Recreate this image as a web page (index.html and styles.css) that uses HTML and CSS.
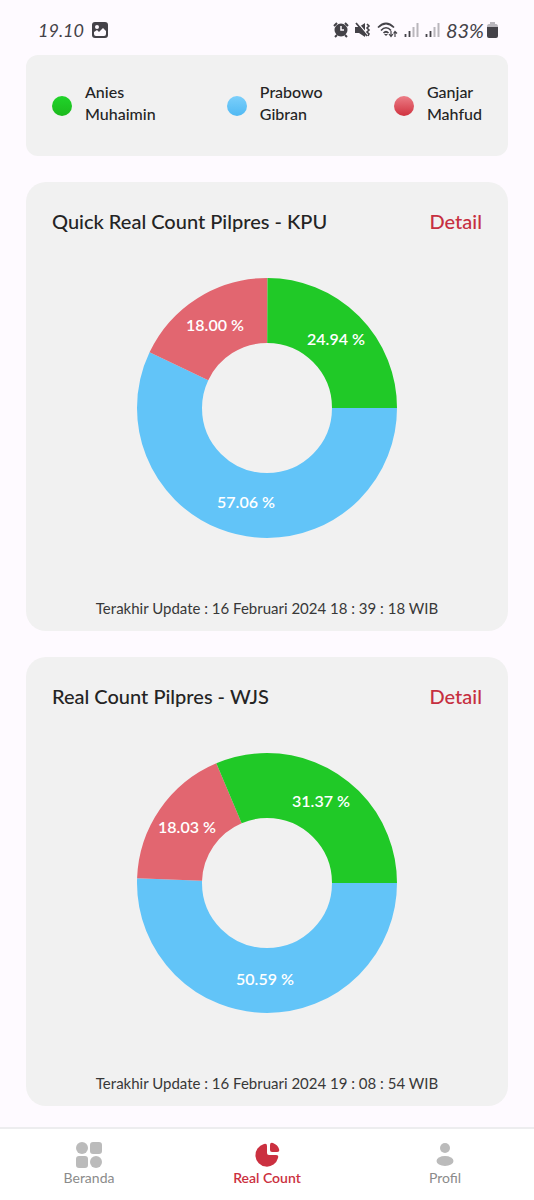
FILE: index.html
```html
<!DOCTYPE html>
<html lang="id">
<head>
  <meta charset="UTF-8" />
  <meta name="viewport" content="width=device-width, initial-scale=1.0" />
  <title>Real Count Pilpres</title>
  <link rel="stylesheet" href="styles.css">
</head>
<body>

  <!-- Status bar -->
  <header class="status">
    <div class="status-left">
      <span class="status-text">19.10</span>
      <svg width="16" height="16" viewBox="0 0 16 16">
        <rect width="16" height="16" rx="3" fill="#444248" />
        <circle cx="5" cy="5" r="2" fill="#fefaff" />
        <path d="M2 12V10L5 8L7 10L11 6L14 9V12Q14 14 12 14H4Q2 14 2 12Z" fill="#fefaff" />
      </svg>
    </div>
    <div class="status-right">
      <svg width="16" height="16" viewBox="0 0 16 16">
        <circle cx="8" cy="8" r="6.500" fill="#444248" />
        <path d="M1 4L4 1M12 1L15 4M4 13L2 15M12 13L14 15" stroke="#444248" stroke-width="2" />
        <path d="M8 4V8H11" stroke="#fefaff" stroke-width="1.5" fill="none" />
      </svg>
      <svg width="16" height="16" viewBox="0 0 16 16">
        <path d="M0 5H4L10 1V15L4 11H0Z" fill="#444248" />
        <path d="M2 0L13 13" stroke="#fefaff" stroke-width="1.2" />
        <path d="M1 1L12 14" stroke="#444248" stroke-width="1.8" />
        <path d="M12 2L14 4L12 6L14 8L12 10L14 12L13 14" stroke="#444248" stroke-width="1.6" fill="none" />
      </svg>
      <svg width="21" height="16" viewBox="0 0 21 16">
        <g fill="none" stroke="#444248" stroke-width="1.7">
          <path d="M1 5.500Q9 -2.500 17 5.500" />
          <path d="M4 8.500Q9 3 14 8.500" />
          <path d="M6.500 11Q9 8.500 11.500 11" />
        </g>
        <path d="M7 12H11L9 14Z" fill="#444248" />
        <path d="M14 9V14M12 12L14 14.500L16 12M18 15V10M16.500 11.500L18 9.500L20 11.500" stroke="#444248" stroke-width="1.2" fill="none" />
      </svg>
      <svg width="15" height="16" viewBox="0 0 15 16">
        <path d="M1.500 12V15M5.500 9V15" stroke="#444248" stroke-width="1.8" />
        <path d="M9.500 5V15M13.500 1V15" stroke="#b9b6bc" stroke-width="2" />
      </svg>
      <svg width="15" height="16" viewBox="0 0 15 16">
        <path d="M1.500 12V15M5.500 9V15" stroke="#444248" stroke-width="1.8" />
        <path d="M9.500 5V15M13.500 1V15" stroke="#b9b6bc" stroke-width="2" />
      </svg>
      <span class="status-text battery-text">83%</span>
      <svg width="11" height="16" viewBox="0 0 11 16">
        <path d="M3 0H8V2H9Q11 2 11 5H0Q0 2 2 2H3Z" fill="#b9b6bc" />
        <path d="M0 5H11V14Q11 16 9 16H2Q0 16 0 14Z" fill="#444248" />
      </svg>
    </div>
  </header>

  <main class="content">
    <section class="legend">
      <div class="legend-item">
        <span class="dot dot-green"></span>
        <span class="legend-name">Anies<br>Muhaimin</span>
      </div>
      <div class="legend-item">
        <span class="dot dot-blue"></span>
        <span class="legend-name">Prabowo<br>Gibran</span>
      </div>
      <div class="legend-item">
        <span class="dot dot-red"></span>
        <span class="legend-name">Ganjar<br>Mahfud</span>
      </div>
    </section>

    <section class="card">
      <div class="card-header">
        <h2>Quick Real Count Pilpres - KPU</h2>
        <a href="#kpu">Detail</a>
      </div>
      <svg class="chart" viewBox="0 0 260 260">
        <circle class="slice blue" cx="130" cy="130" r="97.5" pathLength="100" stroke-dasharray="57.06 42.94" />
        <circle class="slice red" cx="130" cy="130" r="97.5" pathLength="100" stroke-dasharray="18 82" stroke-dashoffset="-57.06" />
        <circle class="slice green" cx="130" cy="130" r="97.5" pathLength="100" stroke-dasharray="24.94 75.06" stroke-dashoffset="-75.06" />
        <text x="199" y="67">24.94 %</text>
        <text x="78" y="53">18.00 %</text>
        <text x="109" y="230">57.06 %</text>
      </svg>
      <p class="updated">Terakhir Update : 16 Februari 2024 18 : 39 : 18 WIB</p>
    </section>

    <section class="card">
      <div class="card-header">
        <h2>Real Count Pilpres - WJS</h2>
        <a href="#wjs">Detail</a>
      </div>
      <svg class="chart" viewBox="0 0 260 260">
        <circle class="slice blue" cx="130" cy="130" r="97.5" pathLength="100" stroke-dasharray="50.59 49.41" />
        <circle class="slice red" cx="130" cy="130" r="97.5" pathLength="100" stroke-dasharray="18.03 81.97" stroke-dashoffset="-50.59" />
        <circle class="slice green" cx="130" cy="130" r="97.5" pathLength="100" stroke-dasharray="31.38 68.62" stroke-dashoffset="-68.62" />
        <text x="184" y="54">31.37 %</text>
        <text x="50" y="80">18.03 %</text>
        <text x="128" y="232">50.59 %</text>
      </svg>
      <p class="updated">Terakhir Update : 16 Februari 2024 19 : 08 : 54 WIB</p>
    </section>
  </main>

  <!-- Bottom menu -->
  <nav class="menu">
    <a href="#beranda">
      <svg width="26" height="26" viewBox="0 0 26 26" fill="#bbb">
        <circle cx="6" cy="6" r="6" />
        <rect x="14" width="12" height="12" rx="3" />
        <rect y="14" width="12" height="12" rx="3" />
        <circle cx="20" cy="20" r="6" />
      </svg>
      Beranda
    </a>
    <a href="#real-count" class="active">
      <svg width="26" height="26" viewBox="0 0 26 26" fill="#cb3040">
        <path d="M10 2Q13 1 13 4V11Q13 13 15 13H22Q25 13 24 16A11.500 11.500 0 1 1 10 2Z" />
        <path d="M16 3Q16 0 19 1Q24 3 25 7Q26 10 23 10H18Q16 10 16 8Z" />
      </svg>
      Real Count
    </a>
    <a href="#profil">
      <svg width="26" height="26" viewBox="0 0 26 26" fill="#bbb">
        <circle cx="13" cy="6" r="5" />
        <ellipse cx="13" cy="19" rx="8.500" ry="5" />
      </svg>
      Profil
    </a>
  </nav>

</body>
</html>
```
FILE: styles.css
```css
body {
  margin: 0;
  min-height: 100vh;
  display: flex;
  flex-direction: column;
  background-color: #fefaff;
  color: #242424;
  font-family: Lato, "Open Sans", sans-serif;
}
a {
  text-decoration: none;
}

/* Status bar */
.status {
  display: flex;
  justify-content: space-between;
  align-items: center;
  height: 55px;
  padding: 5px 36px 0 38px;
  box-sizing: border-box;
}
.status-left, .status-right {
  display: flex;
  align-items: center;
}
.status-left {
  gap: 8px;
}
.status-right {
  gap: 6px;
}
.status-text {
  color: #444248;
  font-size: 18px;
  font-style: italic;
}
.battery-text {
  font-size: 20px;
}
.status-right .battery-text {
  margin-right: -3px;
}

.content {
  flex: 1;
  display: flex;
  flex-direction: column;
  gap: 26px;
  padding: 0 26px 20px;
}
.legend {
  display: flex;
  justify-content: space-between;
  padding: 26px;
  border-radius: 12px;
  background-color: #f1f1f1;
}
.legend-item {
  display: flex;
  align-items: center;
  gap: 13px;
  font-size: 16px;
  font-weight: 500;
  line-height: 22px;
}
.legend-name {
  padding-bottom: 5px;
}
.dot {
  width: 20px;
  height: 20px;
  border-radius: 50%;
}
.dot-green {
  background: linear-gradient(#20d42a, #1cb91c);
}
.dot-blue {
  background: linear-gradient(#7bcffb, #50b9f3);
}
.dot-red {
  background: linear-gradient(#ec7d86, #d0323f);
}

.card {
  display: flex;
  flex-direction: column;
  align-items: center;
  padding: 25px 26px 11px;
  border-radius: 20px;
  background-color: #f1f1f1;
}
.card-header {
  align-self: stretch;
  display: flex;
  justify-content: space-between;
  font-size: 20px;
  font-weight: 500;
  line-height: 28px;
}
.card-header h2 {
  margin: 0;
  font-size: 20px;
  font-weight: 500;
}
.card-header a {
  color: #c62f40;
}
.chart {
  width: 260px;
  height: 260px;
  margin: 43px 0 58px;
}
.slice {
  fill: none;
  stroke-width: 65;
}
.blue { stroke: #62c4f8; }
.red { stroke: #e26670; }
.green { stroke: #20c927; }
.chart text {
  fill: white;
  font-size: 16px;
  font-weight: 600;
  text-anchor: middle;
}
.updated {
  margin: 0;
  color: #383838;
  font-size: 15px;
  line-height: 24px;
}

/* Bottom menu */
.menu {
  position: sticky;
  bottom: 0;
  display: flex;
  height: 73px;
  padding-top: 13px;
  box-sizing: border-box;
  border-top: 2px solid #ededef;
  background-color: white;
}
.menu a {
  flex: 1;
  display: flex;
  flex-direction: column;
  align-items: center;
  color: #8b8b8b;
  font-size: 14px;
  line-height: 20px;
}
.menu .active {
  color: #cb3040;
  font-weight: 600;
}
```
